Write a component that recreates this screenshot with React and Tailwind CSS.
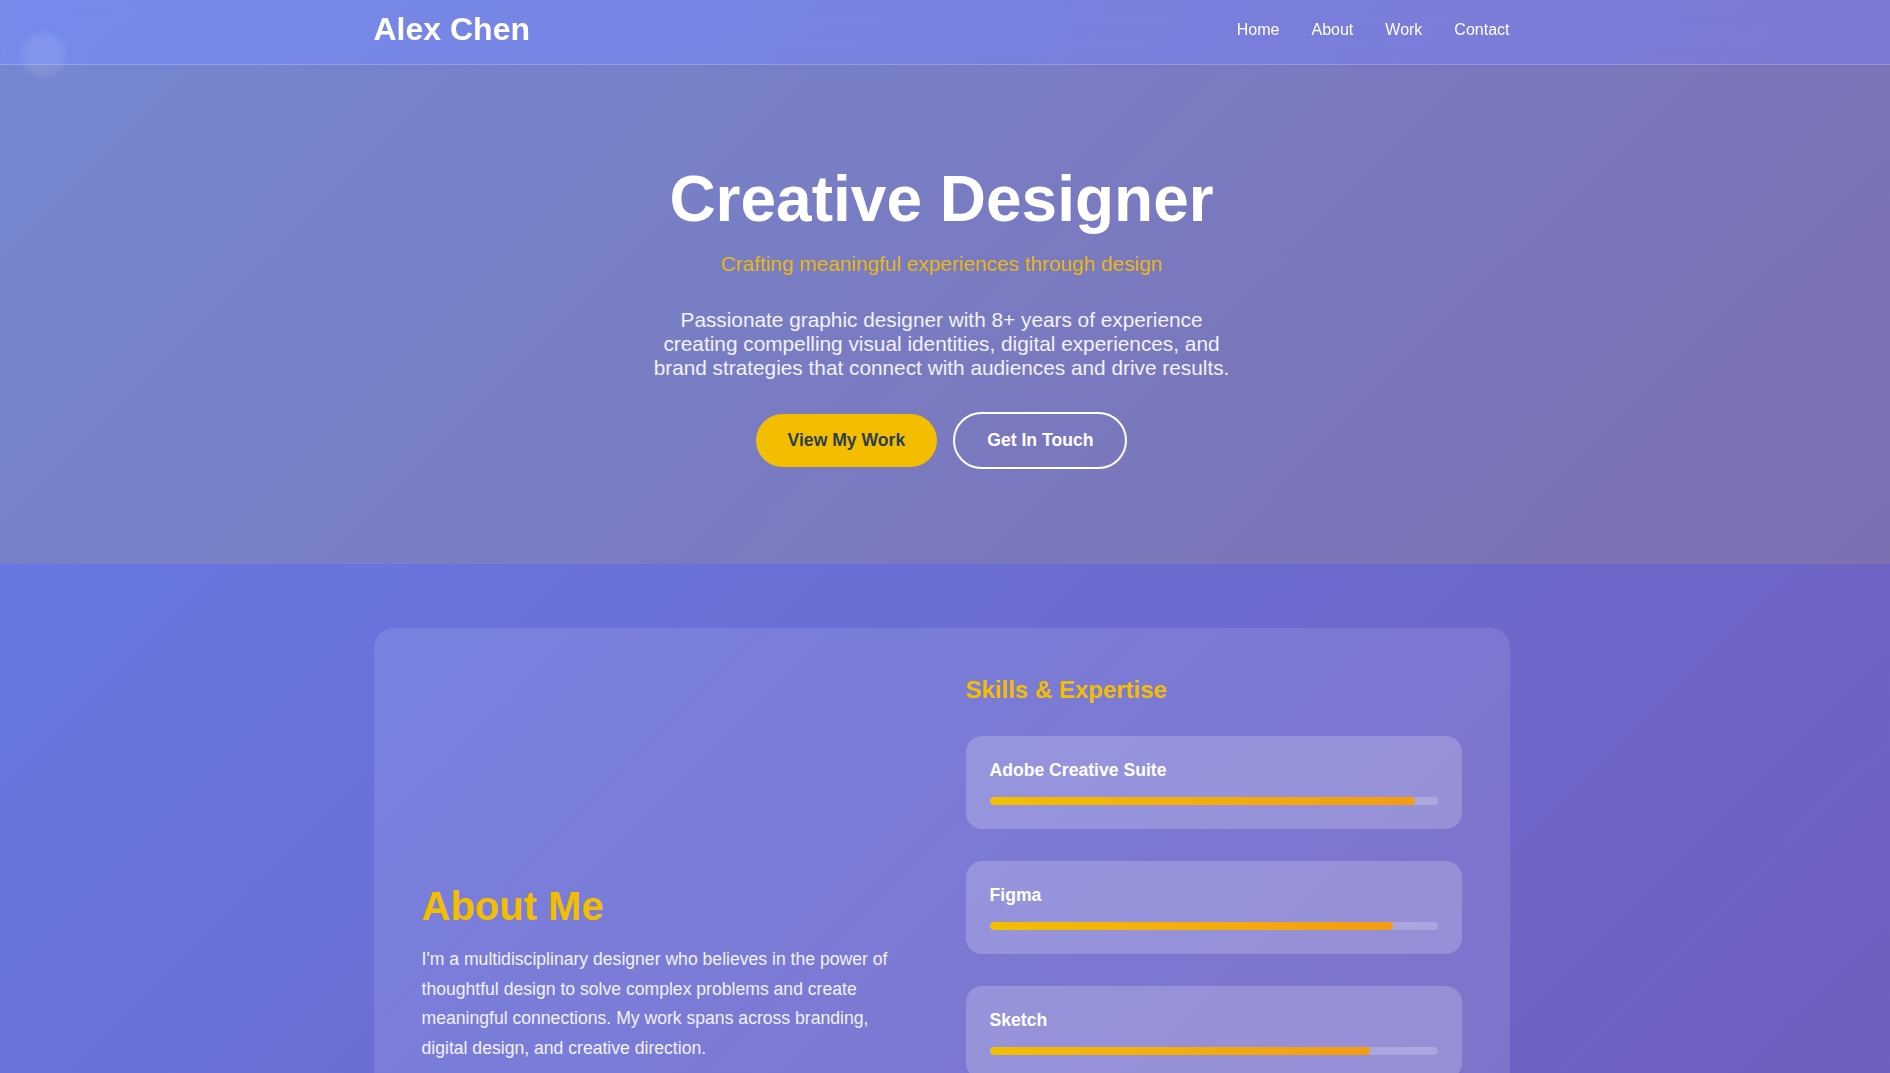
import React from "react";

const skills = [
  { name: "Adobe Creative Suite", level: 95 },
  { name: "Figma", level: 90 },
  { name: "Sketch", level: 85 },
  { name: "After Effects", level: 80 },
  { name: "Webflow", level: 75 },
  { name: "Blender", level: 70 },
];

const projects = [
  { title: "Lumen Coffee Rebrand", category: "Brand Identity" },
  { title: "Northwind Banking App", category: "Digital Design" },
  { title: "Atlas Travel Magazine", category: "Editorial" },
  { title: "Verde Skincare Packaging", category: "Packaging" },
  { title: "Pulse Music Festival", category: "Campaign" },
  { title: "Orbit Analytics Dashboard", category: "UI / UX" },
];

const stats = [
  { value: "150+", label: "Projects Completed" },
  { value: "60+", label: "Happy Clients" },
  { value: "8+", label: "Years Experience" },
];

function Header() {
  return (
    <header className="bg-white/10 border-b border-white/20 backdrop-blur-md pr-[7px]">
      <div className="max-w-[1200px] mx-auto px-8 h-16 pb-1 flex items-center justify-between">
        <a href="#" className="text-[2rem] font-bold text-white mb-0.5">
          Alex Chen
        </a>
        <nav>
          <ul className="flex gap-8 text-base text-white">
            <li><a href="#home">Home</a></li>
            <li><a href="#about">About</a></li>
            <li><a href="#work">Work</a></li>
            <li><a href="#contact">Contact</a></li>
          </ul>
        </nav>
      </div>
    </header>
  );
}

function Hero() {
  return (
    <section id="home" className="bg-[#ffd700]/10 pr-[7px]">
      <div className="max-w-[1200px] mx-auto px-8 pt-24 pb-[95px] text-center">
        <h1 className="text-[4rem] font-bold leading-[1.2] text-white mb-3.5">
          Creative Designer
        </h1>
        <p className="text-[1.3rem] text-[#f4be00] opacity-90 mb-8">
          Crafting meaningful experiences through design
        </p>
        <p className="text-[1.3rem] text-white/90 max-w-[600px] mx-auto mb-8">
          Passionate graphic designer with 8+ years of experience creating
          compelling visual identities, digital experiences, and brand
          strategies that connect with audiences and drive results.
        </p>
        <div className="flex items-center justify-center gap-4">
          <a
            href="#work"
            className="px-8 py-4 rounded-full bg-[#f4be00] text-[#2c3e50] text-[1.1rem] font-bold"
          >
            View My Work
          </a>
          <a
            href="#contact"
            className="px-8 py-4 rounded-full border-2 border-white text-white text-[1.1rem] font-bold"
          >
            Get In Touch
          </a>
        </div>
      </div>
    </section>
  );
}

function SkillCard({ skill }) {
  return (
    <div className="bg-white/20 rounded-2xl p-6">
      <h4 className="text-[1.1rem] font-bold text-white mb-4">{skill.name}</h4>
      <div className="h-2 rounded-full bg-white/20 overflow-hidden">
        <div
          className="h-full rounded-full bg-gradient-to-r from-[#f4be00] to-[#f39c12]"
          style={{ width: `${skill.level}%` }}
        />
      </div>
    </div>
  );
}

function About() {
  return (
    <section id="about" className="pr-[7px]">
      <div className="max-w-[1200px] mx-auto px-8 py-16">
        <div className="bg-white/10 rounded-[20px] p-12 grid grid-cols-2 gap-12 items-center">
          <div>
            <h2 className="text-[2.5rem] font-bold text-[#f4be00] mb-4">
              About Me
            </h2>
            <p className="text-[1.1rem] leading-[1.7] text-white/90 mb-4">
              I'm a multidisciplinary designer who believes in the power of
              thoughtful design to solve complex problems and create meaningful
              connections. My work spans across branding, digital design, and
              creative direction.
            </p>
            <p className="text-[1.1rem] leading-[1.7] text-white/90">
              When I'm not designing, you'll find me exploring art galleries,
              experimenting with film photography, or mentoring emerging
              designers in the local creative community.
            </p>
            <div className="flex gap-10 mt-[23px]">
              {stats.map((s) => (
                <div key={s.label}>
                  <div className="text-[2rem] font-bold text-[#f4be00]">
                    {s.value}
                  </div>
                  <div className="text-[0.9rem] text-white/80">{s.label}</div>
                </div>
              ))}
            </div>
          </div>
          <div>
            <h3 className="text-[1.5rem] font-bold text-[#f4be00] mb-8">
              Skills &amp; Expertise
            </h3>
            <div className="flex flex-col gap-8">
              {skills.map((s) => (
                <SkillCard key={s.name} skill={s} />
              ))}
            </div>
          </div>
        </div>
      </div>
    </section>
  );
}

function Work() {
  return (
    <section id="work" className="pr-[7px]">
      <div className="max-w-[1200px] mx-auto px-8 py-16">
        <h2 className="text-[2.5rem] font-bold text-[#f4be00] text-center mb-12">
          Featured Work
        </h2>
        <div className="grid grid-cols-3 gap-8">
          {projects.map((p) => (
            <div key={p.title} className="bg-white/10 rounded-[20px] overflow-hidden">
              <div className="h-[240px] bg-white/10" />
              <div className="p-6">
                <p className="text-[0.9rem] text-[#f4be00] mb-2">{p.category}</p>
                <h3 className="text-[1.3rem] font-bold text-white">{p.title}</h3>
              </div>
            </div>
          ))}
        </div>
      </div>
    </section>
  );
}

function Contact() {
  return (
    <section id="contact" className="pr-[7px]">
      <div className="max-w-[1200px] mx-auto px-8 py-16">
        <div className="bg-white/10 rounded-[20px] p-16 text-center">
          <h2 className="text-[2.5rem] font-bold text-[#f4be00] mb-4">
            Let's Work Together
          </h2>
          <p className="text-[1.2rem] text-white/90 max-w-[600px] mx-auto mb-8">
            Have a project in mind? I'd love to hear about it. Drop me a line
            and let's create something memorable.
          </p>
          <a
            href="mailto:hello@alexchen.design"
            className="inline-block px-8 py-4 rounded-full bg-[#f4be00] text-[#2c3e50] text-[1.1rem] font-bold"
          >
            hello@alexchen.design
          </a>
        </div>
      </div>
    </section>
  );
}

export default function App() {
  return (
    <div className="relative min-h-screen overflow-hidden bg-[linear-gradient(135deg,#667eea_0%,#764ba2_100%)] font-['Liberation_Sans',Arial,sans-serif] leading-[normal]">
      <div className="pointer-events-none absolute left-[22px] top-[33px] w-11 h-11 rounded-full bg-white/10 blur-[3px] z-10" />
      <Header />
      <Hero />
      <About />
      <Work />
      <Contact />
      <footer className="border-t border-white/20 py-8 text-center text-white/70 text-[0.9rem] pr-[7px]">
        © 2024 Alex Chen. All rights reserved.
      </footer>
    </div>
  );
}
